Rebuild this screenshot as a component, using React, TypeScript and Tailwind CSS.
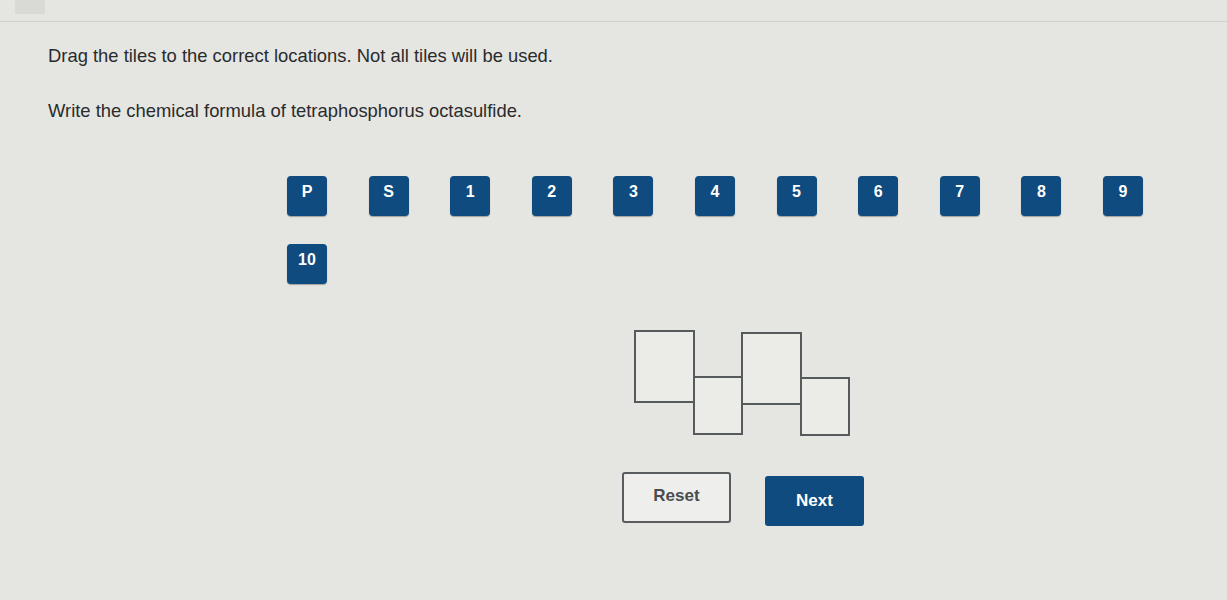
const tiles = ['P', 'S', '1', '2', '3', '4', '5', '6', '7', '8', '9', '10'];

function Tile({ label }: { label: string }) {
  return (
    <div className="flex h-[40px] w-[40px] items-center justify-center rounded-[4px] bg-[#0f4b7e] pb-[8px] text-[16px] font-bold text-white shadow-[0_1px_1px_rgba(0,0,0,0.3)]">
      {label}
    </div>
  );
}

function Slot({ size }: { size: 'big' | 'sub' }) {
  return size === 'big' ? (
    <div className="h-[73px] w-[61px] border-2 border-[#555a5c] bg-[#ebece8]" />
  ) : (
    <div className="-ml-[2px] mt-[46px] h-[59px] w-[50px] border-2 border-[#555a5c] bg-[#ebece8]" />
  );
}

export default function App() {
  return (
    <div className="min-h-[600px] w-full bg-[#e5e6e2] font-['Liberation_Sans',Arial,sans-serif] text-[#2a2b2c]">
      <div className="flex h-[22px] items-start border-b border-[#cfd0cc]">
        <div className="ml-[15px] h-[14px] w-[30px] bg-[#d9dad6]" />
      </div>

      <div className="pl-[48px]">
        <p className="mt-[22px] text-[18.4px] leading-[24px]">
          Drag the tiles to the correct locations. Not all tiles will be used.
        </p>
        <p className="mt-[31px] text-[18.4px] leading-[24px]">
          Write the chemical formula of tetraphosphorus octasulfide.
        </p>

        <div className="ml-[239px] mt-[53px] flex w-[890px] flex-wrap gap-x-[41.6px] gap-y-[28px]">
          {tiles.map((t) => (
            <Tile key={t} label={t} />
          ))}
        </div>

        <div className="ml-[586px] mt-[46px] flex items-start">
          <Slot size="big" />
          <Slot size="sub" />
          <div className="-ml-[2px] mt-[2px]">
            <Slot size="big" />
          </div>
          <div className="mt-[1px]">
            <Slot size="sub" />
          </div>
        </div>

        <div className="ml-[574px] mt-[36px] flex items-start gap-[34px]">
          <button className="h-[51px] w-[109px] rounded-[3px] border-2 border-[#5a5d60] bg-[#eeefec] pb-[4px] text-[17px] font-bold text-[#4a4d50]">
            Reset
          </button>
          <button className="mt-[4px] h-[50px] w-[99px] rounded-[3px] bg-[#0f4b7e] text-[17px] font-bold text-white">
            Next
          </button>
        </div>
      </div>
    </div>
  );
}
